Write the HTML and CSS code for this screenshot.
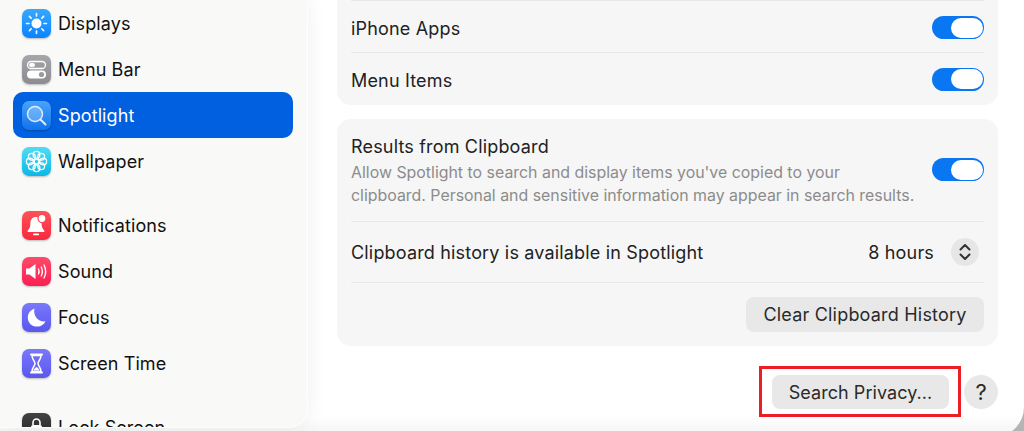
FILE: index.html
```html
<!DOCTYPE html>
<html lang="en">
<head>
    <meta charset="UTF-8">
    <title>Spotlight Settings</title>
    <link rel="stylesheet" href="styles.css">
</head>
<body>

<div class="window">
    <aside class="sidebar">
        <div class="nav-group">
            <a class="nav-item" href="#">
                <span class="icon icon-displays">
                    <svg viewBox="0 0 29 29"><circle cx="14.500" cy="14.500" r="5" fill="#fff"/><g stroke="#fff" stroke-width="1.600" stroke-linecap="round"><path d="M14.500 4.500v2.500M14.500 22v2.500M4.500 14.500H7M22 14.500h2.500M7.400 7.400l1.800 1.800M19.800 19.800l1.800 1.800M7.400 21.600l1.800-1.800M19.800 9.200l1.800-1.800"/></g></svg>
                </span>
                Displays
            </a>
            <a class="nav-item" href="#">
                <span class="icon icon-menubar">
                    <svg viewBox="0 0 29 29"><rect x="5.500" y="6.500" width="18" height="7" rx="3.500" fill="none" stroke="#fff" stroke-width="1.300"/><rect x="7" y="8" width="6" height="4" rx="2" fill="#fff"/><rect x="5" y="15.500" width="19" height="8" rx="4" fill="#fff"/><circle cx="19.500" cy="19.500" r="2.600" fill="#9a9a9e"/></svg>
                </span>
                Menu Bar
            </a>
            <a class="nav-item active" href="#">
                <span class="icon icon-spotlight">
                    <svg viewBox="0 0 29 29"><circle cx="13" cy="13" r="7.500" fill="#fff" fill-opacity=".25" stroke="#dcecff" stroke-width="1.500"/><path d="M18.500 18.500l5 5" stroke="#dcecff" stroke-width="2" stroke-linecap="round"/></svg>
                </span>
                Spotlight
            </a>
            <a class="nav-item" href="#">
                <span class="icon icon-wallpaper">
                    <svg viewBox="0 0 29 29"><g fill="none" stroke="#fff" stroke-width="1.300"><circle cx="14.500" cy="14.500" r="2.400"/><circle cx="14.500" cy="7.800" r="3.400"/><circle cx="14.500" cy="21.200" r="3.400"/><circle cx="7.800" cy="14.500" r="3.400"/><circle cx="21.200" cy="14.500" r="3.400"/><circle cx="9.800" cy="9.800" r="3.400"/><circle cx="19.200" cy="9.800" r="3.400"/><circle cx="9.800" cy="19.200" r="3.400"/><circle cx="19.200" cy="19.200" r="3.400"/></g></svg>
                </span>
                Wallpaper
            </a>
        </div>
        <div class="nav-group">
            <a class="nav-item" href="#">
                <span class="icon icon-notifications">
                    <svg viewBox="0 0 29 29"><path d="M14 6c-3.600 0-5.600 2.700-5.600 6.200 0 3.600-.8 5.400-2.600 7.200-.6.700-.2 1.600.7 1.600h15c.9 0 1.300-.9.700-1.600-1.800-1.800-2.600-3.600-2.600-7.200C19.600 8.700 17.600 6 14 6z" fill="#fff"/><rect x="11" y="22.500" width="6" height="1.800" rx=".9" fill="#fff"/><circle cx="20" cy="7.500" r="4" fill="#fff" stroke="#fb3d4c" stroke-width="1.200"/></svg>
                </span>
                Notifications
            </a>
            <a class="nav-item" href="#">
                <span class="icon icon-sound">
                    <svg viewBox="0 0 29 29"><path d="M4 11.500h3.500L13.500 7v15l-6-4.500H4z" fill="#fff"/><g fill="none" stroke="#fff" stroke-width="1.300" stroke-linecap="round"><path d="M16.500 12c.8 1.600.8 3.400 0 5"/><path d="M19.200 10c1.500 2.900 1.500 6.100 0 9"/><path d="M22 8c2.200 4.200 2.200 8.800 0 13"/></g></svg>
                </span>
                Sound
            </a>
            <a class="nav-item" href="#">
                <span class="icon icon-focus">
                    <svg viewBox="0 0 29 29"><path d="M12.500 5.500C8.500 7 5.800 10.500 5.800 14.700c0 5.200 4.200 8.900 9.300 8.900 3.800 0 7-2.100 8.300-5.300-6.400 1-12.800-4.900-10.900-12.800z" fill="#fff"/></svg>
                </span>
                Focus
            </a>
            <a class="nav-item" href="#">
                <span class="icon icon-screentime">
                    <svg viewBox="0 0 29 29"><path d="M9 5.500h11M9 23.500h11" stroke="#fff" stroke-width="2" stroke-linecap="round"/><path d="M10 6.500c0 4 3 5.500 3 8s-3 4-3 8h9c0-4-3-5.500-3-8s3-4 3-8z" fill="none" stroke="#fff" stroke-width="1.500"/><path d="M11.500 21.500c.5-1.800 2-2.800 3-3.500 1 .7 2.500 1.700 3 3.500z" fill="#fff"/></svg>
                </span>
                Screen Time
            </a>
        </div>
        <div class="nav-group">
            <a class="nav-item" href="#">
                <span class="icon icon-lock">
                    <svg viewBox="0 0 29 29"><path d="M11 12V9.500a3.500 3.500 0 0 1 7 0V12" fill="none" stroke="#fff" stroke-width="1.600"/><rect x="9" y="12" width="11" height="9" rx="2" fill="#fff"/></svg>
                </span>
                Lock Screen
            </a>
        </div>
    </aside>

    <main class="content">
        <section class="card card-top">
            <div class="row">
                <span class="row-label">iPhone Apps</span>
                <span class="toggle"></span>
            </div>
            <div class="row">
                <span class="row-label">Menu Items</span>
                <span class="toggle"></span>
            </div>
        </section>

        <section class="card card-clipboard">
            <div class="row row-desc">
                <div class="desc-text">
                    <div>Results from Clipboard</div>
                    <p>Allow Spotlight to search and display items you've copied to your<br>clipboard. Personal and sensitive information may appear in search results.</p>
                </div>
                <span class="toggle"></span>
            </div>
            <div class="row row-history">
                <span>Clipboard history is available in Spotlight</span>
                <div class="picker">
                    <span>8 hours</span>
                    <span class="stepper">
                        <svg viewBox="0 0 28 28"><path d="M9.500 11.500L14 7l4.500 4.500M9.500 16.500L14 21l4.500-4.500" fill="none" stroke="#333" stroke-width="2" stroke-linecap="round" stroke-linejoin="round"/></svg>
                    </span>
                </div>
            </div>
            <div class="row row-action">
                <button class="btn btn-clear">Clear Clipboard History</button>
            </div>
        </section>

        <footer class="footer">
            <div class="highlight">
                <button class="btn btn-privacy">Search Privacy...</button>
            </div>
            <button class="btn btn-help">?</button>
        </footer>
    </main>
</div>

</body>
</html>
```

FILE: styles.css
```css
* {
    margin: 0;
    padding: 0;
    box-sizing: border-box;
}

html, body {
    width: 100%;
    height: 100%;
    overflow: hidden;
    background-color: #b4b4b4;
}

body {
    font-family: Inter, "Liberation Sans", sans-serif;
    font-size: 18px;
    color: #222;
}

.window {
    display: flex;
    height: 437px;
    background: linear-gradient(#fff 416px, #f6f6f6 431px);
    border-bottom-right-radius: 30px;
    overflow: hidden;
}

.sidebar {
    width: 307px;
    height: 427px;
    flex-shrink: 0;
    padding: 0 14px 0 13px;
    background-color: #f9f9f8;
    border-bottom-right-radius: 18px;
    box-shadow: 0 0 0 1px rgba(255, 255, 255, 0.8), 0 0 22px rgba(0, 0, 0, 0.07);
    overflow: hidden;
}

.nav-group {
    margin-bottom: 18px;
}

.nav-item {
    display: flex;
    align-items: center;
    gap: 7px;
    height: 46px;
    padding-left: 9px;
    border-radius: 10px;
    color: #111;
    letter-spacing: 0.1px;
    text-decoration: none;
}

.nav-item.active {
    background-color: #0060df;
    color: #fff;
}

.icon {
    width: 29px;
    height: 29px;
    border-radius: 7px;
    box-shadow: 0 1px 2px rgba(0, 0, 0, 0.25);
    flex-shrink: 0;
}

.icon svg {
    display: block;
    width: 100%;
    height: 100%;
}

.icon-displays { background: linear-gradient(#37a8ff, #0a84ff); }
.icon-menubar { background: linear-gradient(#a6a6aa, #8c8c90); }
.icon-spotlight { background: linear-gradient(#4aa3fb, #0f73ee); }
.icon-wallpaper { background: linear-gradient(#4fdcf5, #0bb8e6); }
.icon-notifications { background: linear-gradient(#ff5257, #f8283f); }
.icon-sound { background: linear-gradient(#ff4b6a, #f91f52); }
.icon-focus { background: linear-gradient(#7a78fa, #5a58ee); }
.icon-screentime { background: linear-gradient(#7a78fa, #5a58ee); }
.icon-lock { background: linear-gradient(#444, #1c1c1c); }

.content {
    flex: 1;
    padding: 0 26px 0 30px;
    letter-spacing: 0.17px;
}

.card {
    background-color: #f6f6f6;
    border-radius: 14px;
    padding: 0 14px;
}

.card-top {
    height: 105px;
    border-top-left-radius: 0;
    border-top-right-radius: 0;
    margin-bottom: 14px;
}

.row {
    display: flex;
    align-items: center;
    justify-content: space-between;
    border-top: 1px solid #e9e9e9;
}

.card-top .row {
    height: 53px;
}

.card-top .row:first-child {
    height: 52px;
    padding-top: 2px;
}

.row-label {
    padding-top: 2px;
}

.card-clipboard {
    height: 227px;
}

.card-clipboard .row:first-child {
    border-top: 0;
}

.row-desc {
    height: 102px;
    padding-top: 2px;
}

.row-desc .toggle {
    margin-bottom: 3px;
}

.desc-text p {
    margin-top: 4px;
    font-size: 15.9px;
    line-height: 23px;
    letter-spacing: 0;
    color: #8c8c8c;
}

.row-history {
    height: 61px;
}

.row-action {
    height: 64px;
    justify-content: flex-end;
}

.picker {
    display: flex;
    align-items: center;
    gap: 17px;
    margin-right: 5px;
}

.stepper {
    width: 28px;
    height: 28px;
    border-radius: 50%;
    background-color: #e6e6e6;
}

.stepper svg {
    display: block;
}

.toggle {
    position: relative;
    width: 52px;
    height: 23px;
    border-radius: 12px;
    background-color: #0a77f2;
}

.toggle::after {
    content: "";
    position: absolute;
    top: 1.5px;
    right: 1px;
    width: 32px;
    height: 20px;
    border-radius: 10px;
    background-color: #fff;
}

.btn {
    border: 0;
    border-radius: 8px;
    background-color: #e8e8e8;
    font-family: inherit;
    font-size: 18px;
    color: #2a2a2a;
}

.btn-clear {
    width: 238px;
    height: 35px;
    letter-spacing: 0.2px;
}

.footer {
    display: flex;
    justify-content: flex-end;
    align-items: center;
    gap: 15px;
    margin-top: 29px;
}

.btn-privacy {
    width: 177px;
    height: 34px;
    letter-spacing: 0.06px;
}

.btn-help {
    width: 34px;
    height: 34px;
    border-radius: 50%;
    font-size: 22px;
}

.highlight {
    position: relative;
    display: flex;
}

/* red annotation frame drawn over the button */
.highlight::after {
    content: "";
    position: absolute;
    top: -9px;
    left: -13px;
    right: -12px;
    bottom: -8px;
    border: 3px solid #ee1c25;
}
```
